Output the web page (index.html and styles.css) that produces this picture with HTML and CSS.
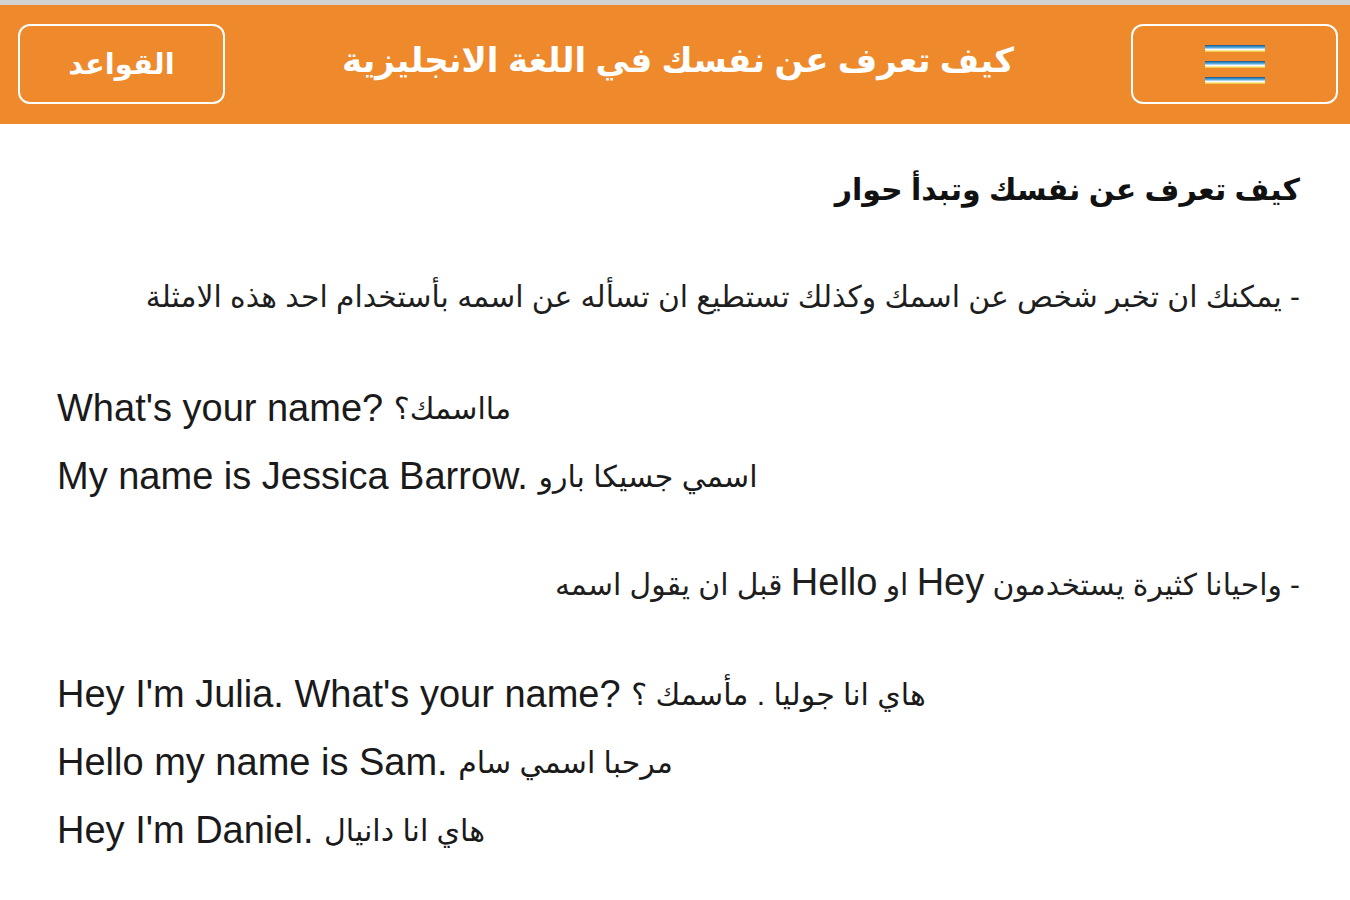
FILE: index.html
```html
<!DOCTYPE html>
<html lang="ar">
<head>
<meta charset="utf-8">
<title>كيف تعرف عن نفسك في اللغة الانجليزية</title>
<link rel="stylesheet" href="styles.css">
</head>
<body>
<div class="topline"></div>
<header class="bar">
  <div class="btn rules">القواعد</div>
  <h1 class="title" dir="rtl">كيف تعرف عن نفسك في اللغة الانجليزية</h1>
  <div class="btn menu">
    <span class="line"></span>
    <span class="line"></span>
    <span class="line"></span>
  </div>
</header>
<main class="content">
  <h2 class="heading" dir="rtl">كيف تعرف عن نفسك وتبدأ حوار</h2>
  <p class="ar gap1" dir="rtl">- يمكنك ان تخبر شخص عن اسمك وكذلك تستطيع ان تسأله عن اسمه بأستخدام احد هذه الامثلة</p>
  <div class="group gap2">
    <p class="en">What's your name? <bdi dir="rtl">مااسمك؟</bdi></p>
    <p class="en">My name is Jessica Barrow. <bdi dir="rtl">اسمي جسيكا بارو</bdi></p>
  </div>
  <p class="ar gap3" dir="rtl">- واحيانا كثيرة يستخدمون <span class="lat">Hey</span> او <span class="lat">Hello</span> قبل ان يقول اسمه</p>
  <div class="group gap3">
    <p class="en">Hey I'm Julia. What's your name? <bdi dir="rtl">هاي انا جوليا . مأسمك ؟</bdi></p>
    <p class="en">Hello my name is Sam. <bdi dir="rtl">مرحبا اسمي سام</bdi></p>
    <p class="en">Hey I'm Daniel. <bdi dir="rtl">هاي انا دانيال</bdi></p>
  </div>
</main>
</body>
</html>
```
FILE: styles.css
```css
html, body {
  margin: 0;
  padding: 0;
  background: #ffffff;
}
body {
  font-family: "Liberation Sans", Arial, "DejaVu Sans", sans-serif;
  color: #1e1e1e;
}
.topline {
  height: 5px;
  background: #d2d2d2;
}
.bar {
  height: 119px;
  background: #ee8a2c;
  display: flex;
  align-items: center;
  justify-content: space-between;
  padding: 0 12px 0 18px;
  box-sizing: border-box;
}
.btn {
  width: 207px;
  height: 80px;
  box-sizing: border-box;
  border: 2px solid #ffffff;
  border-radius: 12px;
  display: flex;
  align-items: center;
  justify-content: center;
  margin-top: -1px;
}
.rules {
  color: #ffffff;
  font-weight: bold;
  font-size: 29px;
}
.menu {
  flex-direction: column;
  gap: 9px;
}
.line {
  display: block;
  width: 60px;
  height: 7px;
  background: linear-gradient(to bottom, #16568a 0%, #4fa6dc 35%, #ffffff 65%, #f3c21a 100%);
}
.title {
  margin: 0;
  color: #ffffff;
  font-weight: bold;
  font-size: 34px;
  line-height: 1;
  margin-top: -10px;
}
.content {
  padding: 32px 50px 0 57px;
}
.heading {
  margin: 0;
  font-size: 30px;
  font-weight: bold;
  line-height: 68px;
  height: 68px;
  color: #111111;
}
.ar {
  margin: 0;
  font-size: 29.8px;
  line-height: 68px;
  height: 68px;
  color: #1e1e1e;
}
.ar .lat {
  font-size: 38px;
  line-height: 1;
}
.en {
  margin: 0;
  font-size: 38px;
  line-height: 68px;
  height: 68px;
  color: #1a1a1a;
}
.en bdi {
  font-size: 30px;
  line-height: 1;
  vertical-align: 2px;
}
.gap1 { margin-top: 39px; }
.gap2 { margin-top: 43px; }
.gap3 { margin-top: 41px; }
```
